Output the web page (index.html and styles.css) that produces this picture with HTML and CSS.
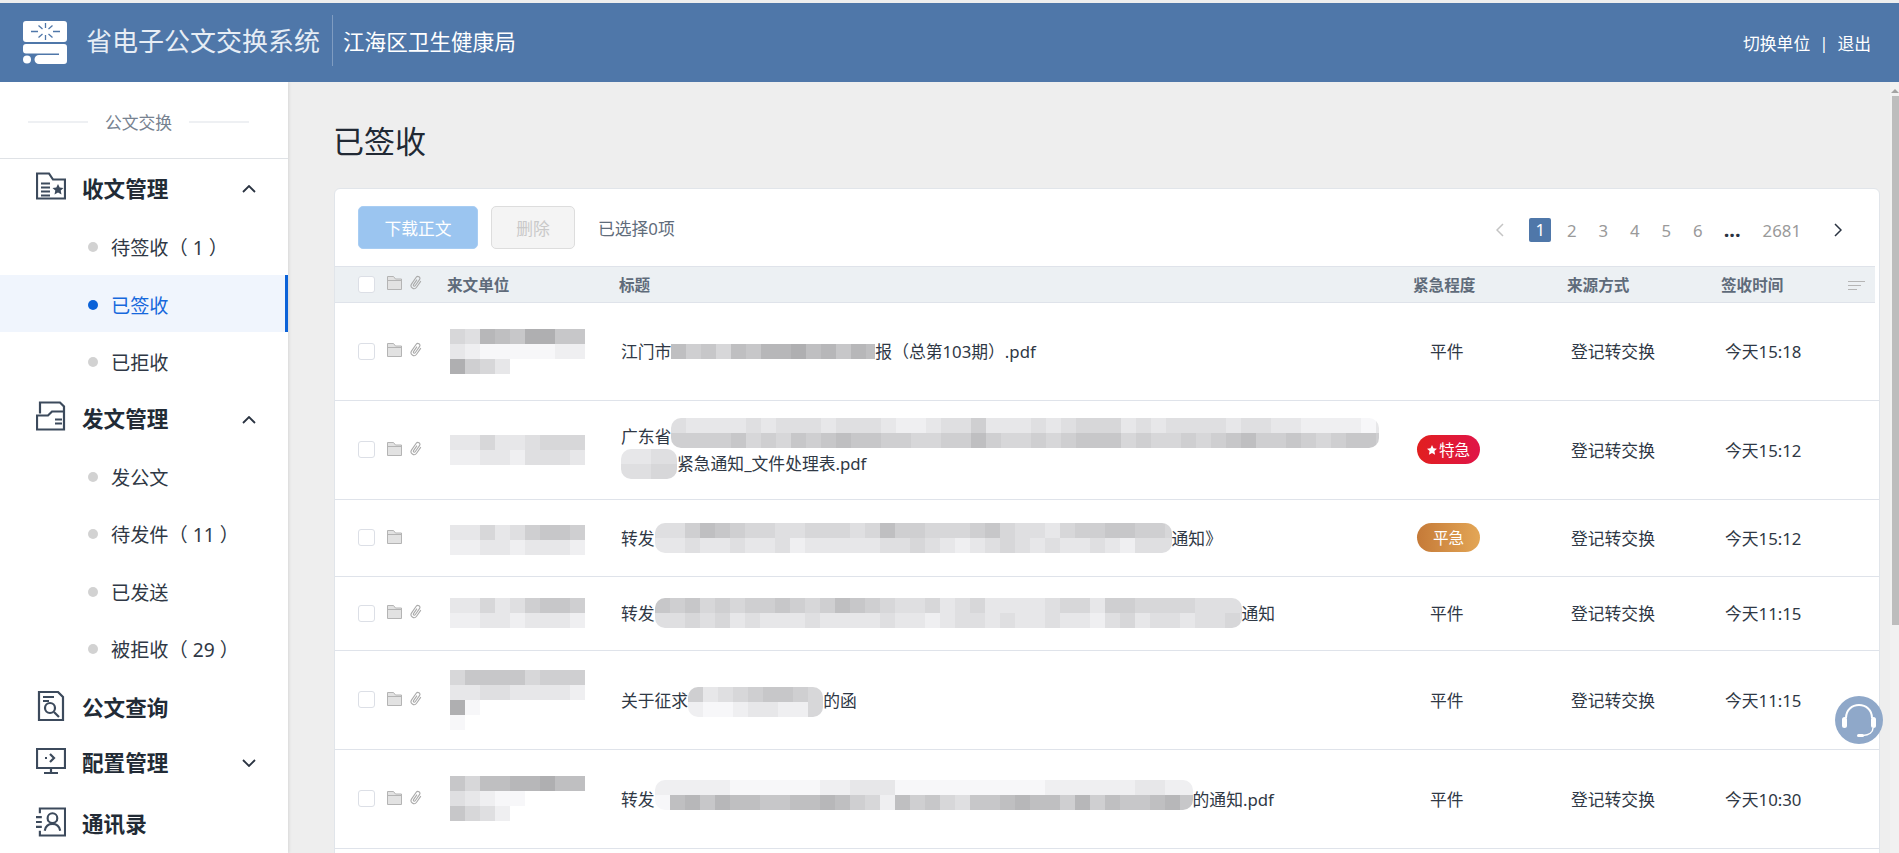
FILE: index.html
```html
<!doctype html>
<html lang="zh-CN">

<head>
    <meta charset="utf-8" />
    <title>省电子公文交换系统</title>
    <link rel="stylesheet" href="styles.css">
</head>

<body>
    <svg class="sprites" width="0" height="0">
        <symbol id="i-folder" viewBox="0 0 15 14">
            <path d="M.5 13.500V.5h6l2 2.500h6v10.500z" fill="#e2e2e2" stroke="#b4b4b4" />
            <path d="M.5 4.500h14" stroke="#b4b4b4" />
        </symbol>
        <symbol id="i-clip" viewBox="0 0 13 16">
            <path transform="rotate(35 6.500 8)" d="M9 4v7.500a3 3 0 0 1-6 0V3.500a2 2 0 0 1 4 0V11a1 1 0 0 1-2 0V5" fill="none" stroke="#aaa" stroke-width="1.100" />
        </symbol>
        <symbol id="i-up" viewBox="0 0 14 8">
            <path d="M1 7l6-6 6 6" fill="none" stroke="#2a3341" stroke-width="1.800" />
        </symbol>
    </svg>

    <header class="topbar">
        <svg class="logo" viewBox="0 0 44 43">
            <rect width="44" height="21" rx="3" fill="#fff" />
            <g stroke="#4f77a9" stroke-width="1.300">
                <path d="M22.500 2v5M22.500 14v5M8 10.500h7M30 10.500h7M15.500 4.500l4 3.500M29.500 4.500l-4 3.500M15.500 16.500l4-3.500M29.500 16.500l-4-3.500" />
            </g>
            <path d="M3 23h38a3 3 0 0 1 3 3v14a3 3 0 0 1-3 3H16a4.500 4.500 0 0 1 0-9h20v-1.500H3a3 3 0 0 1-3-3V26a3 3 0 0 1 3-3z" fill="#fff" />
            <circle cx="4" cy="38.500" r="4" fill="#fff" />
        </svg>
        <span class="sys-name">省电子公文交换系统</span>
        <span class="unit-name">江海区卫生健康局</span>
        <nav class="top-links">
            <a>切换单位</a>
            <span class="sep">|</span>
            <a>退出</a>
        </nav>
    </header>

    <div class="layout">
        <aside class="sidebar">
            <div class="side-title"><span>公文交换</span></div>

            <div class="nav-head">
                <svg class="nav-icon" viewBox="0 0 30 27" fill="none" stroke="#3c4a5c" stroke-width="2.200">
                    <path d="M1 26V1h12l4 6h12v19z" />
                    <path d="M5 11h9M5 15h9M5 19h9M5 23h9" stroke-width="2" />
                    <path d="M22 11.500l1.700 3.600 3.800.4-2.800 2.600.8 3.900-3.500-2-3.500 2 .8-3.900-2.800-2.600 3.800-.4z" fill="#3c4a5c" stroke="none" />
                </svg>
                <span>收文管理</span>
                <svg class="chev"><use href="#i-up" /></svg>
            </div>
            <a class="nav-item">待签收 <span class="count">（ 1 ）</span></a>
            <a class="nav-item active">已签收</a>
            <a class="nav-item">已拒收</a>

            <div class="nav-head send">
                <svg class="nav-icon" viewBox="0 0 30 29" fill="none" stroke="#3c4a5c" stroke-width="2.200">
                    <path d="M4 12V1h20l4 4v23H1V14h11l4-4h12" />
                    <path d="M19 18h7M19 22h7" />
                </svg>
                <span>发文管理</span>
                <svg class="chev"><use href="#i-up" /></svg>
            </div>
            <a class="nav-item">发公文</a>
            <a class="nav-item">待发件 <span class="count">（ 11 ）</span></a>
            <a class="nav-item">已发送</a>
            <a class="nav-item">被拒收 <span class="count">（ 29 ）</span></a>

            <div class="nav-head tall">
                <svg class="nav-icon" viewBox="0 0 30 30" fill="none" stroke="#3c4a5c" stroke-width="2.200">
                    <path d="M3 1h19l5 5v23H3z" />
                    <path d="M7 6h11M7 10h6" />
                    <circle cx="14" cy="17" r="5" />
                    <path d="M18 21l5 5" />
                </svg>
                <span>公文查询</span>
            </div>
            <div class="nav-head short">
                <svg class="nav-icon" viewBox="0 0 30 26" fill="none" stroke="#3c4a5c" stroke-width="2.200">
                    <path d="M1 1h28v19H1zM15 20v4M8 25h14" />
                    <path d="M14 6l4 4-4 4M9 10h2" />
                </svg>
                <span>配置管理</span>
                <svg class="chev down"><use href="#i-up" /></svg>
            </div>
            <div class="nav-head contacts">
                <svg class="nav-icon" viewBox="0 0 31 30" fill="none" stroke="#3c4a5c" stroke-width="2.200">
                    <path d="M4 6V1h26v28H4v-5" />
                    <path d="M0 10h6M0 15h6M0 20h6" />
                    <circle cx="17" cy="11" r="5" />
                    <path d="M9 24c1-5 4-7 8-7s7 2 8 7" />
                </svg>
                <span>通讯录</span>
            </div>
        </aside>

        <main class="content">
            <h1 class="page-title">已签收</h1>

            <section class="card">
                <div class="toolbar">
                    <button class="btn btn-primary">下载正文</button>
                    <button class="btn btn-off">删除</button>
                    <span class="picked">已选择0项</span>
                    <div class="pager">
                        <svg class="pg-arrow prev" viewBox="0 0 8 14">
                            <path d="M7 1 1 7l6 6" fill="none" stroke="#c4c4c4" stroke-width="1.500" />
                        </svg>
                        <a class="pg pg-on"><b>1</b></a>
                        <a class="pg">2</a>
                        <a class="pg">3</a>
                        <a class="pg">4</a>
                        <a class="pg">5</a>
                        <a class="pg">6</a>
                        <a class="pg pg-dots">...</a>
                        <a class="pg pg-last">2681</a>
                        <svg class="pg-arrow next" viewBox="0 0 8 14">
                            <path d="M1 1l6 6-6 6" fill="none" stroke="#2a3341" stroke-width="1.500" />
                        </svg>
                    </div>
                </div>

                <div class="row row-head">
                    <div class="c-tools">
                        <i class="check"></i>
                        <svg class="ico-folder"><use href="#i-folder" /></svg>
                        <svg class="ico-clip"><use href="#i-clip" /></svg>
                    </div>
                    <div>来文单位</div>
                    <div>标题</div>
                    <div>紧急程度</div>
                    <div>来源方式</div>
                    <div>签收时间</div>
                    <svg class="sort-ico" viewBox="0 0 17 9">
                        <path d="M0 .5h17M0 4.500h13M0 8.500h9" stroke="#b5b5b5" />
                    </svg>
                </div>

                <div class="row h98">
                    <div class="c-tools">
                        <i class="check"></i>
                        <svg class="ico-folder"><use href="#i-folder" /></svg>
                        <svg class="ico-clip"><use href="#i-clip" /></svg>
                    </div>
                    <div class="c-org"><div class="mosaic" data-rows="561230033 789999988 0457"></div></div>
                    <div class="c-title">
                        <div class="t-line">江门市<div class="mosaic" data-width="204" data-rows="24352311021312"></div>报（总第103期）.pdf</div>
                    </div>
                    <div class="c-level">平件</div>
                    <div class="c-src">登记转交换</div>
                    <div class="c-time">今天15:18</div>
                </div>

                <div class="row h99">
                    <div class="c-tools">
                        <i class="check"></i>
                        <svg class="ico-folder"><use href="#i-folder" /></svg>
                        <svg class="ico-clip"><use href="#i-clip" /></svg>
                    </div>
                    <div class="c-org"><div class="mosaic" data-rows="775776555 887786667"></div></div>
                    <div class="c-title">
                        <div class="t-line">广东省<div class="mosaic round up" data-width="708" data-rows="677776766676667887664777676555767666676677888897 444435453432334455442455454333545545432443454334"></div></div>
                        <div class="t-line"><div class="mosaic round head" data-width="56" data-rows="7766 6655"></div>紧急通知_文件处理表.pdf</div>
                    </div>
                    <div class="c-level"><span class="badge badge-red"><svg class="star" viewBox="0 0 10 10"><path d="M5 0l1.500 3.300 3.500.4-2.600 2.400.7 3.600L5 7.900 1.900 9.700l.7-3.600L0 3.700l3.500-.4z" fill="#fff" /></svg>特急</span></div>
                    <div class="c-src">登记转交换</div>
                    <div class="c-time">今天15:12</div>
                </div>

                <div class="row h77">
                    <div class="c-tools">
                        <i class="check"></i>
                        <svg class="ico-folder"><use href="#i-folder" /></svg>
                    </div>
                    <div class="c-org"><div class="mosaic low" data-rows="775764334 887787778"></div></div>
                    <div class="c-title">
                        <div class="t-line">转发<div class="mosaic round" data-width="517" data-rows="66423455665556524455543566754433445 77677677687777766567876567677678666"></div>通知》</div>
                    </div>
                    <div class="c-level"><span class="badge badge-orange">平急</span></div>
                    <div class="c-src">登记转交换</div>
                    <div class="c-time">今天15:12</div>
                </div>

                <div class="row h74">
                    <div class="c-tools">
                        <i class="check"></i>
                        <svg class="ico-folder"><use href="#i-folder" /></svg>
                        <svg class="ico-clip"><use href="#i-clip" /></svg>
                    </div>
                    <div class="c-org"><div class="mosaic" data-rows="775764334 887787778"></div></div>
                    <div class="c-title">
                        <div class="t-line">转发<div class="mosaic round" data-width="587" data-rows="3435454434542345665765777765574455556666 6656576777677776778766767767786576676656"></div>通知</div>
                    </div>
                    <div class="c-level">平件</div>
                    <div class="c-src">登记转交换</div>
                    <div class="c-time">今天11:15</div>
                </div>

                <div class="row h99">
                    <div class="c-tools">
                        <i class="check"></i>
                        <svg class="ico-folder"><use href="#i-folder" /></svg>
                        <svg class="ico-clip"><use href="#i-clip" /></svg>
                    </div>
                    <div class="c-org"><div class="mosaic" data-rows="533335444 776677778 09 9"></div></div>
                    <div class="c-title">
                        <div class="t-line">关于征求<div class="mosaic round low" data-width="135" data-rows="476543345 899877885"></div>的函</div>
                    </div>
                    <div class="c-level">平件</div>
                    <div class="c-src">登记转交换</div>
                    <div class="c-time">今天11:15</div>
                </div>

                <div class="row h99">
                    <div class="c-tools">
                        <i class="check"></i>
                        <svg class="ico-folder"><use href="#i-folder" /></svg>
                        <svg class="ico-clip"><use href="#i-clip" /></svg>
                    </div>
                    <div class="c-org"><div class="mosaic" data-rows="352211022 67899 3568"></div></div>
                    <div class="c-title">
                        <div class="t-line">转发<div class="mosaic round up" data-width="538" data-rows="888889999998877799999999998888887788 921312233221245824356332122414233213"></div>的通知.pdf</div>
                    </div>
                    <div class="c-level">平件</div>
                    <div class="c-src">登记转交换</div>
                    <div class="c-time">今天10:30</div>
                </div>

                <div class="row h99"></div>
            </section>
        </main>

        <div class="scrollbar">
            <i class="sb-arrow"></i>
            <i class="sb-thumb"></i>
        </div>
    </div>

    <a class="help-btn">
        <svg viewBox="0 0 48 48" fill="none" stroke="#fff">
            <path d="M11 22c0-8 6-13 13-13s13 5 13 13" stroke-width="2" />
            <rect x="7" y="21" width="5" height="11" rx="2.500" fill="#fff" stroke="none" />
            <rect x="36" y="21" width="5" height="11" rx="2.500" fill="#fff" stroke="none" />
            <path d="M38 32c0 4-4 7-10 7.500" stroke-width="1.500" />
            <rect x="22" y="38" width="7" height="3" rx="1.500" fill="#fff" stroke="none" />
        </svg>
    </a>

    <script src="mosaic.js"></script>
</body>

</html>
```

FILE: styles.css
```css
* {
    box-sizing: border-box;
}

html,
body {
    height: 100%;
    overflow: hidden;
}

body {
    margin: 0;
    padding-top: 3px;
    background: #eee;
    color: #2f3845;
    font-family: "Noto Sans", "Noto Sans CJK SC", sans-serif;
    font-size: 16.8px;
}

.sprites {
    position: absolute;
}

/* top bar */
.topbar {
    height: 79px;
    padding: 0 28px 0 23px;
    display: flex;
    align-items: center;
    background: #4f77a9;
    color: #fff;
}

.logo {
    width: 44px;
    height: 43px;
    margin-right: 19px;
}

.sys-name {
    font-size: 26px;
    color: #e6edf5;
    margin-top: -6px;
    padding-right: 12px;
    white-space: nowrap;
}

.unit-name {
    display: flex;
    align-items: center;
    height: 51px;
    margin-top: -4px;
    padding-left: 10px;
    border-left: 1px solid #7f9cc1;
    font-size: 21.6px;
    white-space: nowrap;
}

.top-links {
    margin-left: auto;
    display: flex;
    align-items: center;
    gap: 9px;
}

/* left menu */
.layout {
    display: flex;
    height: calc(100% - 79px);
    overflow: hidden;
}

.sidebar {
    flex: 0 0 288px;
    background: #fff;
    box-shadow: 1px 0 3px rgba(0, 0, 0, 0.1);
    overflow: hidden;
}

.side-title {
    height: 77px;
    padding: 3px 39px 0 28px;
    display: flex;
    align-items: center;
    gap: 17px;
    border-bottom: 1px solid #dfe2e6;
    color: #778290;
    white-space: nowrap;
}

.side-title::before,
.side-title::after {
    content: "";
    flex: 1;
    height: 2px;
    background: #eef0f3;
}

.nav-head {
    height: 58px;
    padding-left: 36px;
    display: flex;
    align-items: center;
    position: relative;
    font-size: 21.6px;
    font-weight: 700;
    color: #222b36;
}

.nav-head.send {
    height: 57px;
}

.nav-head.tall {
    height: 62px;
}

.nav-head.short {
    height: 48px;
}

.nav-head.contacts {
    margin-top: 8px;
}

.nav-head > span {
    position: absolute;
    left: 82px;
    margin-top: -2px;
}

.nav-icon {
    width: 30px;
    height: 30px;
    margin-top: -4px;
}

.chev {
    position: absolute;
    left: 242px;
    top: 26px;
    width: 14px;
    height: 8px;
}

.chev.down {
    top: 20px;
    transform: rotate(180deg);
}

.nav-item {
    height: 57.500px;
    padding: 3px 0 0 88px;
    display: flex;
    align-items: center;
    font-size: 19.2px;
    color: #2f3845;
    white-space: pre;
}

.nav-item::before {
    content: "";
    width: 10px;
    height: 10px;
    margin-right: 13px;
    border-radius: 50%;
    background: #d2d2d2;
}

.nav-item .count {
    margin-left: -5px;
}

.nav-item.active {
    background: #f0f5fd;
    border-right: 3px solid #0b62d8;
    color: #1668dc;
}

.nav-item.active::before {
    background: #0b62d8;
}

/* main area */
.content {
    flex: 1;
    padding: 0 10px 0 46px;
    min-width: 0;
    overflow: hidden;
}

.page-title {
    height: 106px;
    margin: 0 0 0 -1px;
    padding-top: 35px;
    font-size: 31px;
    font-weight: 400;
    line-height: 48px;
    color: #212934;
}

.card {
    background: #fff;
    border: 1px solid #e1e5ea;
    border-radius: 6px 6px 0 0;
}

.toolbar {
    height: 77px;
    padding: 0 37px 0 23px;
    display: flex;
    align-items: center;
}

.btn {
    height: 43px;
    border-radius: 5px;
    font: inherit;
}

.btn-primary {
    width: 120px;
    margin-right: 13px;
    background: #9bc5f0;
    border: 1px solid #a8cdf3;
    color: #fff;
}

.btn-off {
    width: 84px;
    margin-right: 23px;
    background: #f4f4f4;
    border: 1px solid #ddd;
    color: #c9c9c9;
}

.picked {
    color: #5f6c7b;
}

.pager {
    margin: 5px 0 0 auto;
    display: flex;
    align-items: center;
    color: #9a9a9a;
}

.pg {
    width: 31.500px;
    text-align: center;
}

.pg-on b {
    display: block;
    width: 22px;
    height: 24px;
    margin: 0 auto;
    border-radius: 2px;
    background: #4f77a9;
    color: #fff;
    font-weight: 400;
    line-height: 24px;
}

.pg-dots {
    width: 37px;
    color: #2a3341;
    font-size: 20px;
    font-weight: 700;
    line-height: 24px;
}

.pg-last {
    width: auto;
    margin-left: 12px;
}

.pg-arrow {
    width: 8px;
    height: 14px;
}

.pg-arrow.prev {
    margin-right: 21px;
}

.pg-arrow.next {
    margin-left: 33px;
}

/* list */
.row {
    display: grid;
    grid-template-columns: 112px 172px 794px 154px 154px 1fr;
    align-items: center;
    padding-bottom: 1px;
    border-bottom: 1px solid #dfe3ea;
    white-space: nowrap;
}

.row-head {
    height: 37px;
    margin-right: 4px;
    position: relative;
    background: #ecf0f3;
    border-top: 1px solid #dfe3ea;
    font-size: 15.600px;
    font-weight: 700;
    color: #5f6b7a;
}

.h98 {
    height: 98px;
}

.h99 {
    height: 99px;
}

.h77 {
    height: 77px;
}

.h74 {
    height: 74px;
}

.c-tools {
    padding-left: 23px;
    display: flex;
    align-items: center;
}

.check {
    width: 17px;
    height: 17px;
    margin-right: 12px;
    background: #fff;
    border: 1px solid #dcdfe6;
    border-radius: 3px;
}

.ico-folder {
    width: 15px;
    height: 14px;
    margin: -2px 8px 0 0;
}

.ico-clip {
    width: 13px;
    height: 16px;
    margin-top: -2px;
}

.sort-ico {
    position: absolute;
    left: 1513px;
    top: 14px;
    width: 17px;
    height: 9px;
}

.c-org {
    padding-left: 3px;
}

.c-title {
    padding-left: 2px;
}

.t-line {
    height: 27px;
    display: flex;
    align-items: center;
}

.c-level {
    padding-left: 17px;
}

.c-src,
.c-time {
    padding-left: 4px;
}

.badge {
    display: flex;
    align-items: center;
    justify-content: center;
    width: 63px;
    height: 29px;
    margin-left: -13px;
    border-radius: 15px;
    color: #fff;
    font-size: 15.600px;
}

.badge-red {
    background: linear-gradient(90deg, #e11f1f, #e01548);
}

.badge-orange {
    background: linear-gradient(90deg, #c57a38, #e3a656);
}

.star {
    width: 10px;
    height: 10px;
    margin-right: 2px;
}

/* pixelated (censored) blocks */
.mosaic {
    display: flex;
    flex-direction: column;
    flex: none;
    overflow: hidden;
}

.mosaic.round {
    border-radius: 10px;
}

.mosaic.up {
    margin-top: -7px;
}

.mosaic.low {
    margin-top: 5px;
}

.mosaic.head {
    margin-top: 2px;
}

.mosaic-row {
    display: flex;
    height: 15px;
}

.mosaic-row i {
    flex: 0 0 15px;
}

/* right side strip */
.scrollbar {
    flex: 0 0 9px;
    background: #f1f1f1;
}

.sb-arrow {
    display: block;
    width: 0;
    height: 0;
    margin: 0 auto 3px;
    border: 4px solid transparent;
    border-top-width: 7px;
    border-bottom-color: #a3a3a3;
}

.sb-thumb {
    display: block;
    height: 529px;
    margin-left: 2px;
    background: #bdbdbd;
}

.help-btn {
    position: fixed;
    left: 1835px;
    top: 696px;
    width: 48px;
    height: 48px;
    border-radius: 50%;
    background: #8fa8c9;
}

.help-btn svg {
    display: block;
}
```

FILE: mosaic.js
```js
// draws the pixelated blocks from the digit strings in data-rows
// digit = grey level, 0 is darkest, 9 is almost white
document.querySelectorAll('.mosaic').forEach(function (el) {
    let rows = el.dataset.rows.split(' ');
    let cols = Math.max.apply(null, rows.map(r => r.length));
    el.style.width = (el.dataset.width || cols * 15) + 'px';
    rows.forEach(function (row) {
        let line = document.createElement('div');
        line.className = 'mosaic-row';
        for (let ch of row) {
            let cell = document.createElement('i');
            let grey = 175 + Number(ch) * 8;
            cell.style.background = `rgb(${grey}, ${grey}, ${grey + 2})`;
            line.appendChild(cell);
        }
        el.appendChild(line);
    });
});
```
